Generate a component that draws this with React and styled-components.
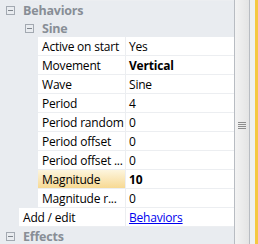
import React from "react";
import styled, { createGlobalStyle } from "styled-components";

const Global = createGlobalStyle`
  html, body { margin: 0; padding: 0; background: #fff; }
  body { font-family: "Open Sans", "Liberation Sans", sans-serif; }
`;

const Frame = styled.div`
  width: 258px;
  height: 244px;
  overflow: hidden;
  display: flex;
  background: #e9ecf0;
`;

const Grid = styled.div`
  width: 234px;
  flex: none;
  display: flex;
  flex-direction: column;
  background: #e9ecf0;
  font-size: 12px;
  letter-spacing: -0.2px;
`;

const TopStrip = styled.div`
  height: 1px;
  margin-left: 19px;
  background: #fff;
  border-bottom: 1px solid #eceef1;
`;

const CategoryRow = styled.div`
  height: 19px;
  display: flex;
  align-items: center;
  padding-left: ${(p) => p.$indent}px;
  padding-top: 1px;
  box-sizing: border-box;
  gap: 8px;
  color: #888e96;
  font-weight: 700;
  font-size: 12.5px;
`;

const MinusBox = styled.span`
  width: 7px;
  height: 7px;
  border: 1px solid #a3a9b1;
  display: flex;
  align-items: center;
  justify-content: center;
  flex: none;
  &::after {
    content: "";
    width: 5px;
    height: 1px;
    background: #7f858c;
  }
`;

const PropRow = styled.div`
  height: 19px;
  display: flex;
  padding-left: ${(p) => p.$indent}px;
`;

const Cell = styled.div`
  height: 19px;
  box-sizing: border-box;
  padding-top: 1px;
  border-bottom: 1px solid #eceef1;
  display: flex;
  align-items: center;
  white-space: nowrap;
  overflow: hidden;
  color: #000;
`;

const LabelCell = styled(Cell)`
  width: ${(p) => 126 - p.$indent}px;
  padding-left: 4px;
  background: ${(p) =>
    p.$selected ? "linear-gradient(to bottom, #fdf5de, #f7d993)" : "#fff"};
  border-right: 1px solid #eceef1;
`;

const ValueCell = styled(Cell)`
  flex: 1;
  padding-left: 3px;
  background: #fff;
  font-weight: ${(p) => (p.$bold ? 700 : 400)};
`;

const Link = styled.a`
  color: #0000ee;
  text-decoration: underline;
`;

const Scrollbar = styled.div`
  width: 16px;
  flex: none;
  box-sizing: border-box;
  border-left: 1px solid #b8bcc2;
  border-right: 1px solid #b8bcc2;
  background: linear-gradient(to right, #f3f3f3, #e4e4e4);
  display: flex;
  align-items: center;
  justify-content: center;
`;

const Grip = styled.div`
  width: 8px;
  display: flex;
  flex-direction: column;
  gap: 1px;
  margin-top: 6px;
  span {
    height: 1px;
    background: #8d8d8d;
  }
`;

const Edge = styled.div`
  flex: 1;
  display: flex;
  background: #eef0f2;
  padding-left: 5px;
`;

const Accent = styled.div`
  width: 3px;
  background: #f5c842;
`;

const props = [
  ["Active on start", "Yes"],
  ["Movement", "Vertical", true],
  ["Wave", "Sine"],
  ["Period", "4"],
  ["Period random", "0"],
  ["Period offset", "0"],
  ["Period offset ...", "0"],
  ["Magnitude", "10", true, true],
  ["Magnitude r...", "0"],
];

export default function App() {
  return (
    <>
      <Global />
      <Frame>
        <Grid>
          <TopStrip />
          <CategoryRow $indent={6}>
            <MinusBox />
            Behaviors
          </CategoryRow>
          <CategoryRow $indent={25}>
            <MinusBox />
            Sine
          </CategoryRow>
          {props.map(([l, v, bold, sel]) => (
            <PropRow key={l} $indent={38}>
              <LabelCell $indent={38} $selected={sel}>
                {l}
              </LabelCell>
              <ValueCell $bold={bold}>{v}</ValueCell>
            </PropRow>
          ))}
          <PropRow $indent={19}>
            <LabelCell $indent={19}>Add / edit</LabelCell>
            <ValueCell>
              <Link href="#">Behaviors</Link>
            </ValueCell>
          </PropRow>
          <CategoryRow $indent={6}>
            <MinusBox />
            Effects
          </CategoryRow>
        </Grid>
        <Scrollbar>
          <Grip>
            <span />
            <span />
            <span />
            <span />
          </Grip>
        </Scrollbar>
        <Edge>
          <Accent />
        </Edge>
      </Frame>
    </>
  );
}
